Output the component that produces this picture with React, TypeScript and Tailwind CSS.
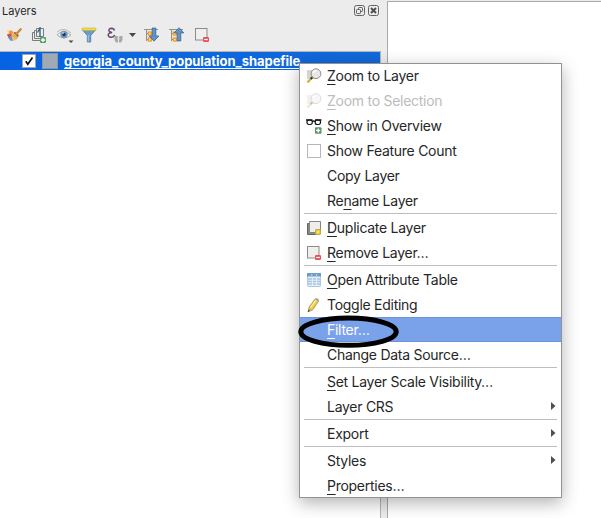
import React from "react";

type IconProps = { children: React.ReactNode; w?: number };

function Glyph({ children, w = 16 }: IconProps) {
  return (
    <svg width={w} height="16" viewBox={`0 0 ${w} 16`} fill="none" className="block shrink-0">
      {children}
    </svg>
  );
}

const StyleIcon = () => (
  <Glyph>
    <path d="M1 3.500l4-.8 3 3.300-5 3z" fill="#f6d873" />
    <path d="M3 4.500l3-1 1.500 2.500-3.500 1.500z" fill="#ee8a6a" />
    <path d="M.8 7.500l4-1 2.200 2.500-4.500 1.500z" fill="#dd4a3c" />
    <path d="M1.800 10.500l4-1.500 3 4-4 1z" fill="#5f96d8" />
    <path d="M5.500 8l3-3 4.500 4.200-3.800 4.300-3-1z" fill="#efc56a" />
    <path d="M6 8.500l5 3.500M7 7.300l4.800 3.500" stroke="#d59545" strokeWidth=".8" />
    <path d="M8.300 5.300l4 3.700" stroke="#8a5c2c" strokeWidth="1.800" />
    <path d="M10.300 7l4.400-4.700" stroke="#c98a40" strokeWidth="2.400" strokeLinecap="round" />
  </Glyph>
);

const AddGroupIcon = () => (
  <Glyph>
    <path d="M3 5.500H1.500v8h8M5 3.500H3.500v8h7M5.500 1.500h7v8h-7z" stroke="#777d77" />
    <path d="M9 10V0M9 1L6.500 5.500" stroke="#315f8b" strokeWidth="1.300" />
    <rect x="9" y="10" width="6" height="6" rx="1" fill="#5aa268" />
    <path d="M12 11v4M10 13h4" stroke="#fff" strokeWidth="1.300" />
  </Glyph>
);

const EyeIcon = () => (
  <Glyph w={18}>
    <path d="M1 8Q7 1.500 15 8Q8 14 1 8z" fill="#f3f3ef" stroke="#b1aea6" />
    <path d="M1 5Q8-.5 15 6" stroke="#bab7ae" />
    <circle cx="8" cy="7.500" r="3.700" fill="#6b9ac9" />
    <circle cx="8" cy="7.500" r="1.700" fill="#203850" />
    <circle cx="7" cy="6" r=".8" fill="#fff" />
    <path d="M12.500 13.500h5L15 16z" fill="#484848" />
  </Glyph>
);

const FunnelIcon = () => (
  <Glyph>
    <path d="M1.500 3h13L9.700 8.500v6.500H6.300V8.500z" fill="#6e9bcb" stroke="#52779f" strokeWidth=".8" />
    <path d="M7.300 8v6.500" stroke="#a8c7e8" />
    <rect x="1" y="1" width="14" height="2.600" rx=".8" fill="#f1df40" stroke="#b9a83a" strokeWidth=".5" />
  </Glyph>
);

const ExpressionIcon = () => (
  <Glyph>
    <path d="M7.500 3.500Q7 1.200 4.500 1.200Q1.700 1.400 2 3.700Q2.300 5.400 5.200 5.400Q1.300 5.600 1.200 8Q1.500 10.400 4.500 10.200Q7 10 7.800 8" stroke="#6b4377" strokeWidth="1.500" />
    <path d="M7.500 9h8v4l-1.500 2.500h-2v-2.500h-1v2.500h-2l-1.500-2.500z" fill="#a9a9a7" />
    <path d="M11.500 9v4" stroke="#e3e3e1" strokeWidth="1.600" />
  </Glyph>
);

function TreeIcon({ up = false }: { up?: boolean }) {
  return (
    <Glyph>
      <path d="M0 2.500h14M2.500 3v11M3 6.500h2M3 12.500h2" stroke="#919191" />
      <rect x="4.300" y="5" width="3" height="3" fill="#ffe1a7" stroke="#f19b26" strokeWidth="1.300" />
      <rect x="4.300" y="11" width="3" height="3" fill="#ffe1a7" stroke="#f19b26" strokeWidth="1.300" />
      {up ? (
        <path d="M10 .7l4.800 5.200h-3v8H8.200v-8h-3z" fill="#6393c6" stroke="#3c658e" strokeWidth=".8" />
      ) : (
        <path d="M8.200 1h3.600v8h3L10 14.200 5.200 9h3z" fill="#6393c6" stroke="#3c658e" strokeWidth=".8" />
      )}
    </Glyph>
  );
}

const RemoveIcon = () => (
  <Glyph>
    <rect x="1.500" y="1.500" width="11.500" height="11.500" fill="#efefee" stroke="#8b8b89" />
    <rect x="9" y="10" width="6" height="5" rx="1.300" fill="#e94d55" />
    <path d="M10.200 12.500h3.600" stroke="#fff" strokeWidth="1.300" />
  </Glyph>
);

const ZoomIcon = () => (
  <Glyph>
    <path d="M1 2h9v9H1z" fill="#d4d4d0" />
    <path d="M5.500 10L1.500 14.500" stroke="#dfad31" strokeWidth="2.200" />
    <path d="M6.600 9L4.700 11" stroke="#333" strokeWidth="2" />
    <circle cx="10" cy="5.700" r="4.900" fill="#e7e7e5" stroke="#8d8d8b" />
    <path d="M7 5Q8 2.500 10.500 2.500" stroke="#fff" strokeWidth="1.300" />
  </Glyph>
);

const GlassesIcon = () => (
  <Glyph>
    <path d="M0 2h6.500M9 2h6.500M6.500 3.500q1.300-1 2.500 0" stroke="#111" strokeWidth="1.300" />
    <rect x="1" y="2" width="5.300" height="4.500" rx="2" stroke="#111" strokeWidth="1.200" />
    <rect x="9.200" y="2" width="5.300" height="4.500" rx="2" stroke="#111" strokeWidth="1.200" />
    <rect x="9" y="9.300" width="6.500" height="6.500" rx="1" fill="#56975f" />
    <path d="M12.250 10.500v4M10.200 12.500h4" stroke="#fff" strokeWidth="1.400" />
  </Glyph>
);

const DuplicateIcon = () => (
  <Glyph>
    <path d="M1.500 3.500h10v11h-10z" fill="#8b8c80" stroke="#64655d" />
    <path d="M3.500 1.500h11v11h-11z" fill="#eeeeed" stroke="#858581" />
    <rect x="9.500" y="9.500" width="5" height="5" rx=".6" fill="#e6c944" stroke="#c9a92f" />
    <path d="M11 11h2v2h-2z" fill="#f6e78b" />
  </Glyph>
);

const TableIcon = () => (
  <Glyph>
    <rect x="1.500" y="1.500" width="13" height="13" rx=".7" fill="#e6eff8" stroke="#adc8df" />
    <path d="M1 1h14v3.500H1z" fill="#6f9dca" />
    <path d="M2 7h4M2 9.500h4M2 12h4M7 7h3M7 9.500h3M7 12h3M11 7h3M11 9.500h3M11 12h3" stroke="#a6c5e1" strokeWidth="1.300" />
    <path d="M5.800 2v2M10.500 2v2" stroke="#d9e8f5" strokeWidth=".8" />
  </Glyph>
);

const PencilIcon = () => (
  <Glyph>
    <path d="M2 15l1.200-5L9 2l3.500 2.300-5.800 8.500z" fill="#e9ce4c" stroke="#93803c" strokeWidth=".7" />
    <path d="M4.500 10.500L10.200 3" stroke="#fff1a0" strokeWidth="1.200" />
    <path d="M9 2l1.200-1.300 3 2-.7 1.600z" fill="#a5a5a5" />
    <path d="M2 15l.9-4 3.200 2z" fill="#c9ad83" />
    <path d="M2 15l.4-2.200 1.500.9z" fill="#333" />
  </Glyph>
);

const CheckboxIcon = () => (
  <Glyph>
    <rect x="1.500" y="1.500" width="13" height="13" fill="#fff" stroke="#b7b7b7" />
  </Glyph>
);

type Entry = {
  pre?: string;
  key?: string;
  rest: string;
  icon?: React.ReactNode;
  state?: "disabled" | "active";
  submenu?: boolean;
};

const groups: Entry[][] = [
  [
    { key: "Z", rest: "oom to Layer", icon: <ZoomIcon /> },
    { key: "Z", rest: "oom to Selection", icon: <ZoomIcon />, state: "disabled" },
    { key: "S", rest: "how in Overview", icon: <GlassesIcon /> },
    { rest: "Show Feature Count", icon: <CheckboxIcon /> },
    { rest: "Copy Layer" },
    { pre: "Re", key: "n", rest: "ame Layer" },
  ],
  [
    { key: "D", rest: "uplicate Layer", icon: <DuplicateIcon /> },
    { key: "R", rest: "emove Layer…", icon: <RemoveIcon /> },
  ],
  [
    { key: "O", rest: "pen Attribute Table", icon: <TableIcon /> },
    { rest: "Toggle Editing", icon: <PencilIcon /> },
    { key: "F", rest: "ilter…", state: "active" },
    { rest: "Change Data Source…" },
  ],
  [{ key: "S", rest: "et Layer Scale Visibility…" }, { rest: "Layer CRS", submenu: true }],
  [{ rest: "Export", submenu: true }],
  [{ rest: "Styles", submenu: true }, { key: "P", rest: "roperties…" }],
];

function MenuRow({ item }: { item: Entry }) {
  const tone =
    item.state === "active"
      ? "bg-[#7aa2eb] text-white border-y border-[#6e94d8]"
      : item.state === "disabled"
        ? "text-[#bcbcbc]"
        : "text-[#262626]";
  return (
    <div className={`flex h-[25px] items-center pl-[7px] pr-[6px] ${tone}`}>
      <div className={`mr-[5px] w-4 ${item.state === "disabled" ? "opacity-30" : ""}`}>{item.icon}</div>
      <span className="grow whitespace-pre text-[14px] leading-[23px] tracking-[-0.27px]">
        {item.pre}
        {item.key && <span className="underline decoration-1 underline-offset-[3px] [text-decoration-skip-ink:none]">{item.key}</span>}
        {item.rest}
      </span>
      {item.submenu && (
        <svg width="5" height="8" viewBox="0 0 5 8" className="mb-px block">
          <path d="M0 0l4.500 4L0 8z" fill="#4e4e4e" />
        </svg>
      )}
    </div>
  );
}

function ContextMenu() {
  return (
    <div className="absolute left-[299px] top-[63px] w-[263px] bg-white shadow-[0_5px_16px_rgba(0,0,0,0.3)]">
      {groups.map((group, i) => (
        <div key={i}>
          {i > 0 && <div className="mx-[5px] h-[2px] border-t border-[#bebebe]" />}
          {group.map((item) => (
            <MenuRow key={item.rest} item={item} />
          ))}
        </div>
      ))}
      <div className="pointer-events-none absolute inset-0 border border-[#929292]" />
    </div>
  );
}

function WindowButtons() {
  return (
    <div className="flex gap-[3px] pb-px">
      <svg width="11" height="11" viewBox="0 0 11 11" fill="none" stroke="#626262">
        <rect x=".5" y=".5" width="10" height="10" rx="2" />
        <rect x="4.500" y="2.500" width="4" height="4" rx=".7" />
        <rect x="2.500" y="4.500" width="4" height="4" rx=".7" fill="#ececec" />
      </svg>
      <svg width="11" height="11" viewBox="0 0 11 11" fill="none" stroke="#626262">
        <rect x=".5" y=".5" width="10" height="10" rx="2" />
        <path d="M3 3l5 5M8 3L3 8" stroke="#505050" strokeWidth="2" />
      </svg>
    </div>
  );
}

export default function App() {
  return (
    <div className="relative flex h-[518px] w-[601px] overflow-hidden bg-[#ececec] font-['Inter','Liberation_Sans',sans-serif]">
      <aside className="flex w-[381px] flex-col">
        <header className="flex h-[22px] items-center justify-between pl-[2px] pr-[2px] text-[11px] text-[#262626]">
          <span>Layers</span>
          <WindowButtons />
        </header>
        <div className="flex h-[29px] items-center pb-[3px] pl-[6px]">
          <StyleIcon />
          <div className="ml-[9px]"><AddGroupIcon /></div>
          <div className="ml-[9px]"><EyeIcon /></div>
          <div className="ml-[7px]"><FunnelIcon /></div>
          <div className="ml-[10px]"><ExpressionIcon /></div>
          <svg width="7" height="4" viewBox="0 0 7 4" className="ml-[6px]">
            <path d="M0 0h7L3.500 4z" fill="#484848" />
          </svg>
          <div className="ml-[8px]"><TreeIcon /></div>
          <div className="ml-[9px]"><TreeIcon up /></div>
          <div className="ml-[9px]"><RemoveIcon /></div>
        </div>
        <div className="grow border-r border-t border-[#b5b5b5] bg-white">
          <div className="flex h-[18px] items-center bg-linear-to-r from-[#0763e2] to-[#1269da] pl-[22px]">
            <svg width="14" height="14" viewBox="0 0 14 14" fill="none">
              <rect x=".5" y=".5" width="13" height="13" fill="#fff" stroke="#a6a6a6" />
              <path d="M3.800 7.300l2 3L10.500 3.500" stroke="#111" strokeWidth="1.700" />
            </svg>
            <div className="ml-[6px] h-4 w-4 border border-[#8995a3] bg-[#a0aab5]" />
            <span className="ml-[6px] text-[13px] font-bold leading-[18px] tracking-[-0.04px] text-white underline decoration-1 underline-offset-2 [text-decoration-skip-ink:none]">
              georgia_county_population_shapefile
            </span>
          </div>
        </div>
      </aside>
      <main className="ml-[6px] mt-px grow border-l border-t border-[#aaaaaa] bg-white" />
      <ContextMenu />
      <svg width="102" height="34" viewBox="0 0 102 34" className="absolute left-[298px] top-[315px]" fill="none">
        <ellipse cx="50.500" cy="16.700" rx="47.700" ry="13.600" stroke="#000" strokeWidth="5" />
      </svg>
    </div>
  );
}
